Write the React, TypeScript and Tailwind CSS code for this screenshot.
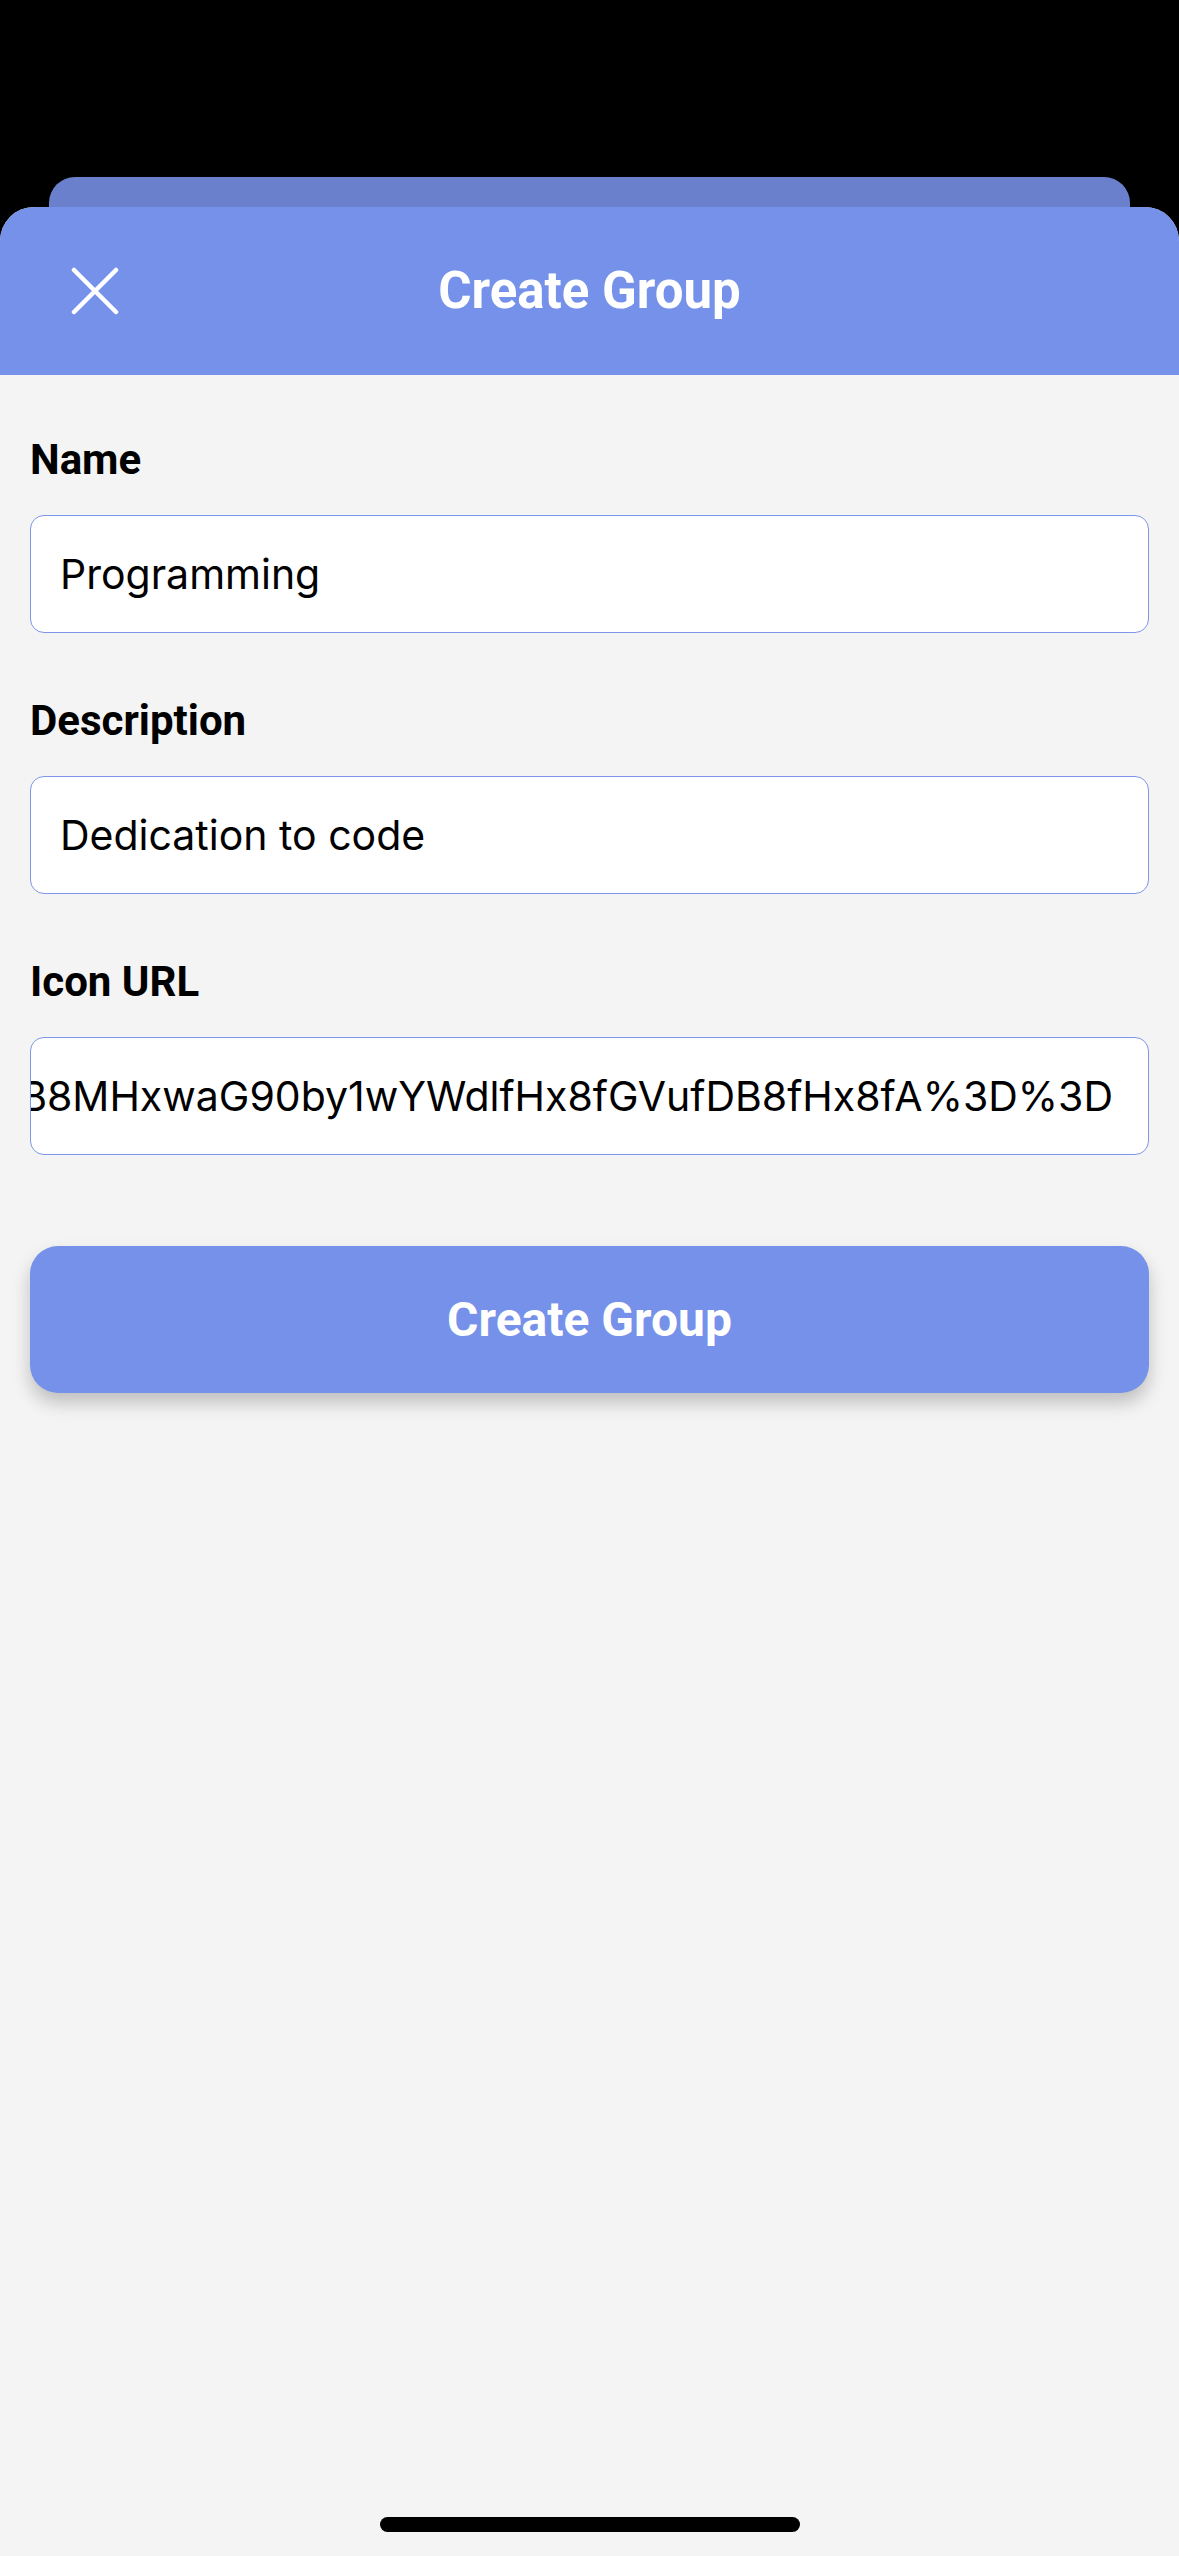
import React from 'react';

const ICON_URL =
  'https://images.unsplash.com/photo-1517694712202-14dd9538aa97?ixlib=rb-4.0.3&ixid=M3wxMjA3fDB8MHxwaG90by1wYWdlfHx8fGVufDB8fHx8fA%3D%3D';

const Field: React.FC<{ label: string; value: string; tail?: boolean; first?: boolean }> = ({
  label,
  value,
  tail,
  first,
}) => (
  <div className={first ? 'flex flex-col' : 'mt-[67px] flex flex-col'}>
    <label className="text-[42px] leading-[42px] font-bold text-black [font-family:Roboto,sans-serif]">
      {label}
    </label>
    <div
      className={`mt-[34px] flex h-[118px] items-center overflow-hidden rounded-[14px] border border-[#7d95ea] bg-white pl-[29px] pr-[35px] ${
        tail ? 'justify-end' : 'justify-start'
      }`}
    >
      <span className="shrink-0 whitespace-nowrap text-[41px] leading-none text-black [font-family:Inter,sans-serif]">
        {value}
      </span>
    </div>
  </div>
);

const App: React.FC = () => {
  return (
    <div className="flex h-[2556px] w-[1179px] flex-col overflow-hidden bg-black">
      {/* Stacked sheet behind */}
      <div className="h-[177px] shrink-0" />
      <div className="mx-[49px] h-[30px] shrink-0 rounded-t-[26px] bg-[#6a80cc]" />

      {/* Front sheet */}
      <div className="flex flex-1 flex-col overflow-hidden rounded-t-[34px] bg-[#f4f4f4]">
        {/* Header */}
        <header className="relative flex h-[168px] shrink-0 items-center justify-center bg-[#7591e9]">
          <button className="absolute left-[66px] top-[55px] flex h-[58px] w-[58px] items-center justify-center">
            <svg width="48" height="48" viewBox="0 0 48 48" fill="none">
              <path
                d="M3 3 L45 45 M45 3 L3 45"
                stroke="white"
                strokeWidth="4.5"
                strokeLinecap="round"
              />
            </svg>
          </button>
          <h1 className="text-[51px] font-bold text-white [font-family:Roboto,sans-serif]">
            Create Group
          </h1>
        </header>

        {/* Form */}
        <main className="flex flex-1 flex-col px-[30px] pt-[64px]">
          <Field first label="Name" value="Programming" />
          <Field label="Description" value="Dedication to code" />
          <Field label="Icon URL" value={ICON_URL} tail />

          <button className="mt-[91px] flex h-[147px] items-center justify-center rounded-[28px] bg-[#7591e9] shadow-[0_10px_18px_rgba(0,0,0,0.22)]">
            <span className="text-[48px] font-bold text-white [font-family:Roboto,sans-serif]">
              Create Group
            </span>
          </button>
        </main>

        {/* Home indicator */}
        <div className="flex shrink-0 justify-center pb-[24px]">
          <div className="h-[15px] w-[420px] rounded-full bg-black" />
        </div>
      </div>
    </div>
  );
};

export default App;
